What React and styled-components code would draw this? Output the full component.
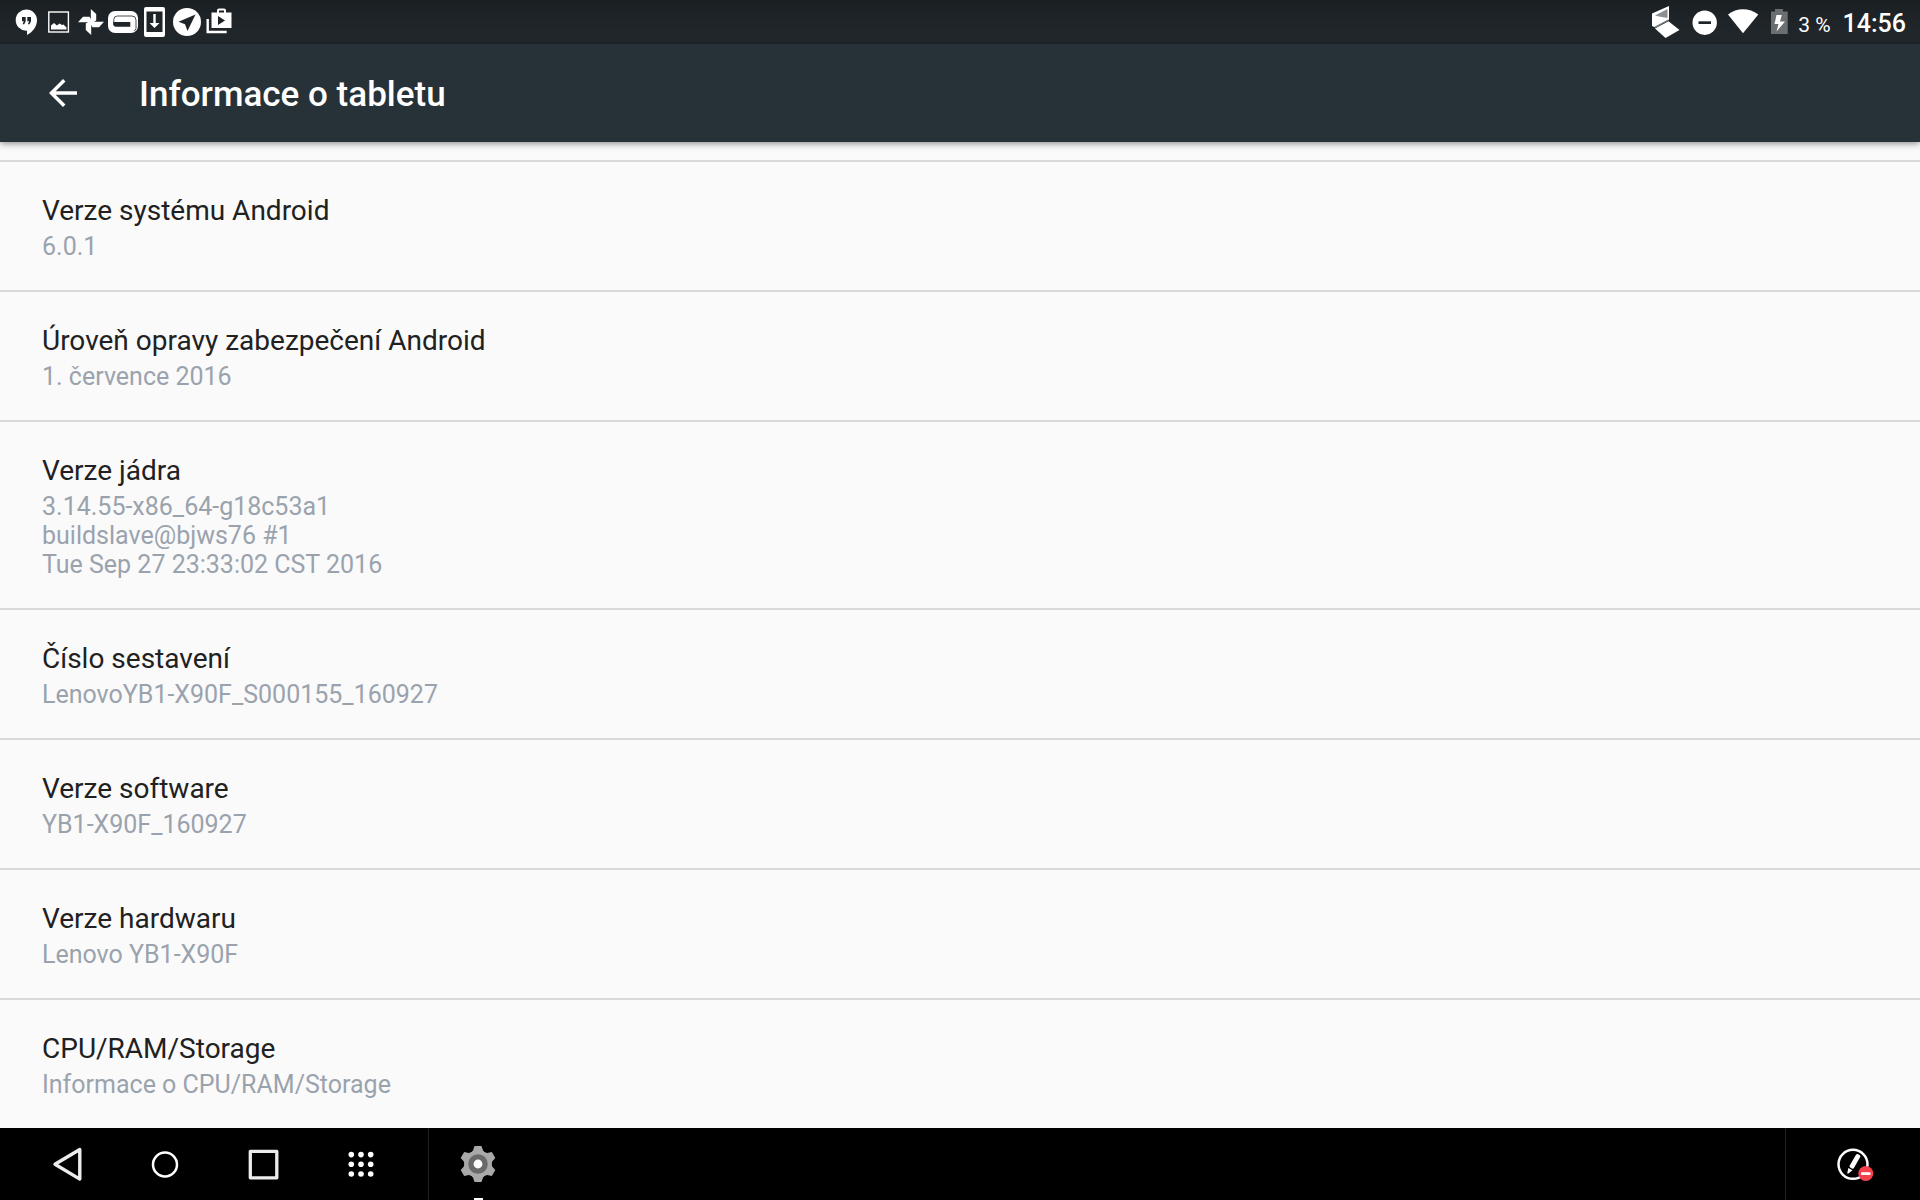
import React from "react";
import styled, { createGlobalStyle } from "styled-components";

const GlobalStyle = createGlobalStyle`
    * {
        box-sizing: border-box;
    }
    body {
        margin: 0;
        font-family: Roboto, "Noto Sans", sans-serif;
        background: #fafafa;
    }
`;

const Screen = styled.div`
    display: flex;
    flex-direction: column;
    height: 100vh;
    overflow: hidden;
`;

const StatusBar = styled.div`
    flex: none;
    display: flex;
    justify-content: space-between;
    align-items: center;
    height: 44px;
    padding: 0 14px 0 10px;
    color: #fff;
    background: linear-gradient(#1a1f22, #22292d);
`;

const StatusGroup = styled.div`
    display: flex;
    align-items: center;
    gap: ${({ $gap }) => $gap || 0}px;
`;

const StatusIcon = styled.svg`
    display: block;
    width: ${({ $width }) => $width || 32}px;
    height: 44px;
    fill: #fff;
`;

const StatusText = styled.div`
    display: flex;
    align-items: baseline;
    gap: 12px;
    padding-top: 4px;
    line-height: 40px;
`;

const Battery = styled.span`
    font-size: 21px;
`;

const Clock = styled.time`
    font-size: 25px;
    font-weight: 500;
`;

const AppBar = styled.header`
    flex: none;
    position: relative;
    display: flex;
    align-items: center;
    gap: 48px;
    height: 98px;
    padding: 0 35px;
    color: #fff;
    background: #273238;
    box-shadow: 0 1px 7px rgba(0, 0, 0, 0.5);
`;

const BackButton = styled.button`
    display: flex;
    align-items: center;
    justify-content: center;
    width: 56px;
    height: 56px;
    padding: 0;
    border: 0;
    color: inherit;
    background: none;
    cursor: pointer;
`;

const Title = styled.h1`
    margin: 0;
    padding-top: 4px;
    font-size: 35px;
    font-weight: 500;
    line-height: 42px;
`;

const List = styled.ul`
    flex: 1;
    min-height: 0;
    margin: 0;
    padding: 18px 0 0;
    overflow: hidden;
    list-style: none;
    background: #fafafa;
`;

const Item = styled.li`
    padding: 31px 42px 29px;
    border-top: 2px solid #d9d9d9;
`;

const ItemTitle = styled.div`
    margin-bottom: 3px;
    font-size: 28px;
    line-height: 36px;
    color: #212121;
`;

const ItemSummary = styled.div`
    font-size: 25px;
    line-height: 29px;
    white-space: pre-line;
    color: #9aa3ad;
`;

const NavBar = styled.nav`
    flex: none;
    display: flex;
    height: 72px;
    background: #000;
`;

const NavKeys = styled.div`
    display: flex;
    padding: 0 18px;
    border-right: 1px solid #1f1f1f;
`;

const NavTray = styled.div`
    display: flex;
    justify-content: center;
    margin-left: auto;
    width: 135px;
    border-left: 1px solid #1f1f1f;
`;

const NavButton = styled.button`
    display: flex;
    align-items: center;
    justify-content: center;
    width: 98px;
    height: 72px;
    padding: 0;
    border: 0;
    background: ${({ $active }) =>
        $active ? "linear-gradient(#fff, #fff) center bottom / 9px 2px no-repeat" : "none"};
    cursor: pointer;
`;

const NavIcon = styled.svg`
    display: block;
    width: 48px;
    height: 48px;
    fill: none;
    stroke: #ececec;
    stroke-width: 3;
    stroke-linejoin: round;
`;

const items = [
    { title: "Verze systému Android", summary: "6.0.1" },
    { title: "Úroveň opravy zabezpečení Android", summary: "1. července 2016" },
    {
        title: "Verze jádra",
        summary: "3.14.55-x86_64-g18c53a1\nbuildslave@bjws76 #1\nTue Sep 27 23:33:02 CST 2016",
    },
    { title: "Číslo sestavení", summary: "LenovoYB1-X90F_S000155_160927" },
    { title: "Verze software", summary: "YB1-X90F_160927" },
    { title: "Verze hardwaru", summary: "Lenovo YB1-X90F" },
    { title: "CPU/RAM/Storage", summary: "Informace o CPU/RAM/Storage" },
];

const bladeAngles = [0, 90, 180, 270];
const toothAngles = [0, 60, 120, 180, 240, 300];
const dots = [14.3, 24, 33.7];

const Notifications = () => (
    <StatusGroup>
        {/* hangouts */}
        <StatusIcon viewBox="0 0 32 44">
            <path d="M16.4 9.5a10.6 10.6 0 0 0-.2 21.2h.8V35c5.5-2.7 10-8.5 10-14.7A10.6 10.6 0 0 0 16.4 9.5z" />
            <path
                d="M12 17h3.7v4.3l-1.5 3h-1.6l1.2-3H12zM17.3 17H21v4.3l-1.5 3h-1.6l1.2-3h-1.8z"
                fill="#1e2427"
            />
        </StatusIcon>
        {/* picture */}
        <StatusIcon viewBox="0 0 32 44">
            <rect x="6.8" y="12" width="19.6" height="20" fill="none" stroke="#fff" strokeWidth="1.4" />
            <path d="M9 29.5v-4l3-2.5 3 2.5 2.500-2 2.500 1.500 1.500-.5 3 3v2z" />
        </StatusIcon>
        {/* photos pinwheel */}
        <StatusIcon viewBox="0 0 32 44">
            {bladeAngles.map((angle) => (
                <path key={angle} d="M16.8 22V9l5.4 5v6.5l-3.200 2z" transform={`rotate(${angle} 17 22)`} />
            ))}
        </StatusIcon>
        {/* spiral */}
        <StatusIcon viewBox="0 0 32 44">
            <rect x="2" y="11" width="30" height="22" rx="7" />
            <path
                d="M7.800 25v-5.500a3.500 3.500 0 0 1 3.500-3.500H26a4 4 0 0 1 4 4v8.500l-1.500 2.500"
                fill="none"
                stroke="#4a4f52"
                strokeWidth="1"
            />
            <path d="M7.300 22h17v4.800H10a2.700 2.700 0 0 1-2.700-2.700z" fill="#1e2427" />
        </StatusIcon>
        {/* download to device */}
        <StatusIcon viewBox="0 0 32 44">
            <path
                fillRule="evenodd"
                d="M8 7h17a2 2 0 0 1 2 2v26a2 2 0 0 1-2 2H8a2 2 0 0 1-2-2V9a2 2 0 0 1 2-2zM8.500 11.500V32h16V11.500z"
            />
            <path d="M15.300 14h2.400v9h3.800l-5 5-5-5h3.800z" />
        </StatusIcon>
        {/* telegram */}
        <StatusIcon viewBox="0 0 32 44">
            <circle cx="17" cy="22" r="14" />
            <path d="M25.500 14.500 8.500 21.800l6.500 2.400 2.500 6.800z" fill="#1e2427" />
        </StatusIcon>
        {/* play store */}
        <StatusIcon viewBox="0 0 32 44">
            <path d="M5.700 19v13h19" fill="none" stroke="#fff" strokeWidth="2.400" />
            <path
                fillRule="evenodd"
                d="M15 12.500v-2a2 2 0 0 1 2-2h5a2 2 0 0 1 2 2v2h5.500V28H9.500V12.500zM17 12.500h5v-2h-5zM16 16v9l7-4.500z"
            />
        </StatusIcon>
    </StatusGroup>
);

const SystemIcons = () => (
    <StatusGroup $gap={7}>
        {/* yoga book */}
        <StatusIcon viewBox="0 0 32 44">
            <path d="M2 13.500 19 6v13.500L5.500 27.500 2 26z" />
            <path d="M5 15.500 17.500 9v9L9 16.500z" fill="#8b8f91" />
            <path d="M5 27 18.500 20" stroke="#777c7f" strokeWidth="1.200" />
            <path d="M5 28.500 18.500 21.200 29.500 30 15.500 38z" />
        </StatusIcon>
        {/* do not disturb */}
        <StatusIcon viewBox="0 0 32 44">
            <circle cx="15.700" cy="22.700" r="12.200" />
            <rect x="9.500" y="21.300" width="12.500" height="2.700" fill="#1e2427" />
        </StatusIcon>
        {/* wifi */}
        <StatusIcon viewBox="0 0 32 44">
            <path d="M0 14.500C4.500 11 9.500 9.300 15 9.300s10.500 1.700 15.300 5.200L15 33.300z" />
        </StatusIcon>
        {/* charging battery */}
        <StatusIcon viewBox="0 0 24 44" $width={24}>
            <path d="M4 11.500h4V9h8v2.500h4.700V34H4z" fill="#6b6f71" />
            <path d="M14.800 15H9.500l-2 9h4l-2 7.500L18 21.500h-5z" />
        </StatusIcon>
        <StatusText>
            <Battery>3 %</Battery>
            <Clock>14:56</Clock>
        </StatusText>
    </StatusGroup>
);

const App = () => {
    return (
        <Screen>
            <GlobalStyle />
            <StatusBar>
                <Notifications />
                <SystemIcons />
            </StatusBar>
            <AppBar>
                <BackButton aria-label="Zpět">
                    <svg width="42" height="42" viewBox="0 0 24 24" fill="currentColor">
                        <path d="M20 11H7.830l5.590-5.590L12 4l-8 8 8 8 1.410-1.410L7.830 13H20v-2z" />
                    </svg>
                </BackButton>
                <Title>Informace o tabletu</Title>
            </AppBar>
            <List>
                {items.map((item) => (
                    <Item key={item.title}>
                        <ItemTitle>{item.title}</ItemTitle>
                        <ItemSummary>{item.summary}</ItemSummary>
                    </Item>
                ))}
            </List>
            <NavBar>
                <NavKeys>
                    <NavButton aria-label="Zpět">
                        <NavIcon viewBox="0 0 48 48">
                            <path d="M12 24.300 36.800 9.500v29.600z" strokeWidth="3.400" />
                        </NavIcon>
                    </NavButton>
                    <NavButton aria-label="Domů">
                        <NavIcon viewBox="0 0 48 48">
                            <circle cx="24" cy="24.500" r="12" stroke="#fff" strokeWidth="2.500" />
                        </NavIcon>
                    </NavButton>
                    <NavButton aria-label="Přehled">
                        <NavIcon viewBox="0 0 48 48">
                            <rect x="11.300" y="11.300" width="26.500" height="26.500" strokeWidth="3.300" />
                        </NavIcon>
                    </NavButton>
                    <NavButton aria-label="Aplikace">
                        <NavIcon viewBox="0 0 48 48">
                            {dots.map((y) =>
                                dots.map((x) => (
                                    <circle key={`${x}-${y}`} cx={x} cy={y + 0.3} r="2.800" fill="#fff" stroke="none" />
                                ))
                            )}
                        </NavIcon>
                    </NavButton>
                </NavKeys>
                <NavButton $active aria-label="Nastavení">
                    <NavIcon viewBox="0 0 48 48">
                        <g fill="#a9a9a9" stroke="none">
                            <circle cx="24" cy="24" r="13.500" />
                            {toothAngles.map((angle) => (
                                <path
                                    key={angle}
                                    d="M20.500 6h7l1.500 4.500 2.500 2.500h-15l2.500-2.500z"
                                    transform={`rotate(${angle} 24 24)`}
                                />
                            ))}
                        </g>
                        <circle cx="24" cy="24" r="7" stroke="#6a6a6a" strokeWidth="5.500" />
                        <circle cx="24" cy="24" r="4.400" fill="#fff" stroke="none" />
                    </NavIcon>
                </NavButton>
                <NavTray>
                    <NavButton aria-label="Pero">
                        <NavIcon viewBox="0 0 48 48">
                            <circle cx="24" cy="24.300" r="14.500" stroke="#fff" strokeWidth="2.500" />
                            <g transform="rotate(30 24 24.300)" fill="#fff" stroke="none">
                                <rect x="21.800" y="13" width="4.800" height="15.500" rx="1.500" />
                                <path d="M21.800 29.800h4.800L24.500 35h-1z" />
                            </g>
                            <circle cx="36.800" cy="33.500" r="7.500" fill="#f4414b" stroke="none" />
                            <rect x="32" y="32.200" width="9.600" height="2.800" rx="1" fill="#fff" stroke="none" />
                        </NavIcon>
                    </NavButton>
                </NavTray>
            </NavBar>
        </Screen>
    );
};

export default App;
